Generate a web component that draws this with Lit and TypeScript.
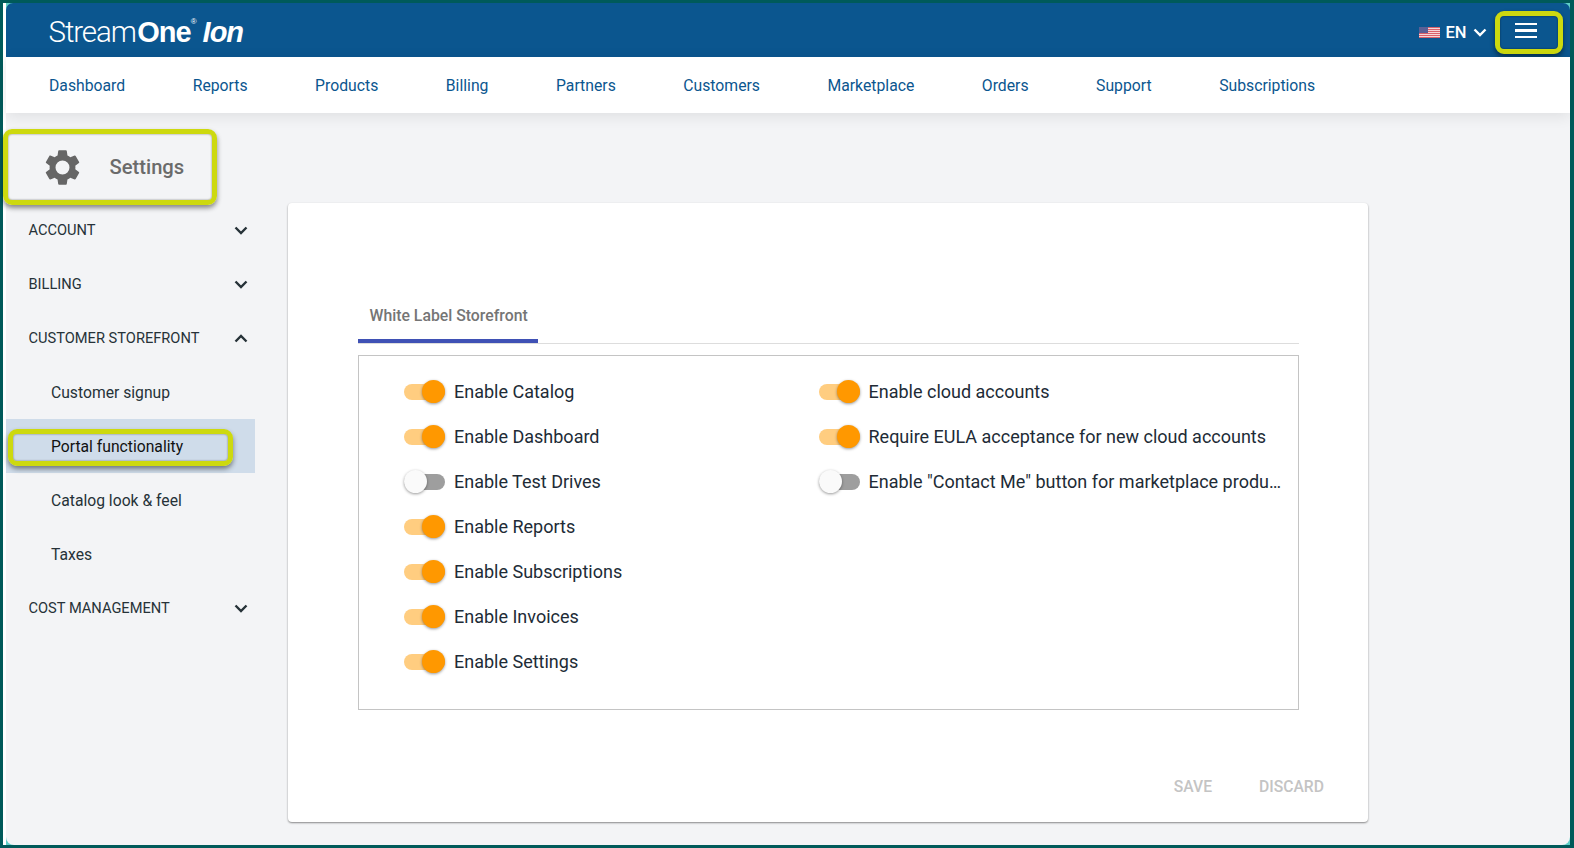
import { LitElement, html, css, svg } from "lit";
import { customElement } from "lit/decorators.js";

const NAV = ["Dashboard","Reports","Products","Billing","Partners","Customers","Marketplace","Orders","Support","Subscriptions"];
const LEFT: [string, boolean][] = [["Enable Catalog",true],["Enable Dashboard",true],["Enable Test Drives",false],["Enable Reports",true],["Enable Subscriptions",true],["Enable Invoices",true],["Enable Settings",true]];
const RIGHT: [string, boolean][] = [["Enable cloud accounts",true],["Require EULA acceptance for new cloud accounts",true],["Enable \"Contact Me\" button for marketplace products",false]];

const chev = (up: boolean) => html`<svg class="chev" viewBox="0 0 14 9" width="14" height="9"><path d=${up ? "M1.5 7.5 7 2l5.5 5.5" : "M1.5 1.5 7 7l5.5-5.5"} fill="none" stroke="#263238" stroke-width="2.4"/></svg>`;

@customElement("app-root")
export class AppRoot extends LitElement {
  static styles = css`
    :host { display: block; width: 1574px; height: 848px; box-sizing: border-box; background: #005a5a; padding: 3px 4px 3px 3px; font-family: Roboto, sans-serif; overflow: hidden; }
    .frame { position: relative; height: 100%; background: #fff; border-left: 3px solid #fff; display: flex; flex-direction: column; }
    .corner { position: absolute; width: 10px; height: 10px; background: #5fcfc8; z-index: 0; }
    .c1 { left: 0; top: 0; } .c2 { right: 0; top: 0; } .c3 { left: 0; bottom: 0; } .c4 { right: 0; bottom: 0; }
    .head { position: relative; z-index: 1; flex: none; height: 54px; background: #0b568f; color: #fff; display: flex; align-items: center; padding: 0 0 0 42.5px; border-radius: 7px 7px 0 0; }
    .logo { display: flex; align-items: baseline; margin-top: 4px; font-family: "Liberation Sans", Arial, sans-serif; font-size: 29px; letter-spacing: -1px; }
    .logo .thin { font-family: Roboto, sans-serif; font-weight: 300; font-size: 29.5px; letter-spacing: -1.1px; margin-right: 1.5px; }
    .logo b { font-weight: 700; }
    .logo sup { font-size: 8px; align-self: flex-start; margin: 2px 0 0 0; letter-spacing: 0; }
    .logo i { font-weight: 700; margin-left: 6px; }
    .spacer { flex: 1; }
    .lang { display: flex; align-items: center; font-size: 16.5px; font-weight: 500; margin: 4px 28px 0 0; }
    .lang svg.flag { margin-right: 5px; }
    .lang svg.ch { margin-left: 6.5px; }
    .burger { width: 22px; display: flex; flex-direction: column; gap: 4px; margin: 1px 33px 0 0; }
    .burger span { height: 2.5px; background: #fff; }
    .nav { position: relative; z-index: 1; flex: none; height: 56px; background: #fff; display: flex; align-items: center; gap: 67.5px; padding-left: 43px; box-shadow: 0 3px 14px rgba(0,0,0,.09); }
    .nav a { font-size: 15.75px; color: #0b568f; }
    .main { position: relative; flex: 1; display: flex; min-height: 0; background: #f3f4f6; border-radius: 0 0 8px 8px; z-index: 0; }
    .side { width: 249px; flex: none; }
    .title { height: 90px; box-sizing: border-box; padding: 18px 0 0 35px; display: flex; align-items: center; gap: 25.5px; font-size: 20.2px; font-weight: 500; color: #6b6b6b; position: relative; }
    .item { height: 54px; display: flex; align-items: center; justify-content: space-between; font-size: 14.65px; color: #263238; padding: 0 7px 0 22.5px; box-sizing: border-box; position: relative; }
    .item.sub { padding-left: 45px; font-size: 15.7px; }
    .item.active { background: #cfdcea; color: #111; }
    .mark { position: absolute; border: 5px solid #cdd90f; border-radius: 9px; box-shadow: 0 3px 5px rgba(0,0,0,.45), inset 0 0 2px rgba(0,0,0,.5); pointer-events: none; box-sizing: border-box; }
    .m1 { left: -3px; top: 16px; width: 214px; height: 76px; }
    .m2 { left: 1.5px; top: 10px; width: 225px; height: 37px; }
    .m3 { right: 7px; top: 8px; width: 68px; height: 43px; z-index: 3; }
    .content { flex: 1; padding: 90px 0 0 33px; }
    .card { width: 1080px; height: 619px; background: #fff; border-radius: 4px; box-shadow: 0 1px 2px rgba(0,0,0,.45); box-sizing: border-box; padding: 100px 69px 0 70px; display: flex; flex-direction: column; }
    .tabs { border-bottom: 1px solid #ddd; height: 40px; display: flex; flex: none; }
    .tab { width: 180px; height: 40px; box-sizing: border-box; border-bottom: 4px solid #3f51b5; padding-left: 11.5px; font-size: 15.8px; font-weight: 500; color: #757575; line-height: 25px; margin-bottom: -1px; }
    .panel { margin-top: 11px; height: 355px; box-sizing: border-box; border: 1px solid #c4c4c4; display: grid; grid-template-columns: 414.5px 1fr; padding: 13px 15px 0 45px; flex: none; }
    .col { display: flex; flex-direction: column; min-width: 0; }
    .row { height: 45px; display: flex; align-items: center; gap: 9px; font-size: 18px; color: #212b36; min-width: 0; }
    .row .lbl { white-space: nowrap; overflow: hidden; text-overflow: ellipsis; min-width: 0; }
    .sw { position: relative; flex: none; width: 41px; height: 16px; border-radius: 8px; background: #ffcd80; }
    .sw::after { content: ""; position: absolute; top: -4px; right: 0; width: 23px; height: 23px; border-radius: 50%; background: #ff9800; box-shadow: 0 1px 3px rgba(0,0,0,.4); }
    .sw.off { background: #9e9e9e; }
    .sw.off::after { right: auto; left: 0; background: #fafafa; }
    .actions { display: flex; justify-content: flex-end; gap: 47px; margin-top: 67px; margin-right: -25px; font-size: 15.7px; font-weight: 500; color: #c4c4c4; }
  `;

  private rows(list: [string, boolean][]) {
    return list.map(([t, on]) => html`<div class="row"><span class="sw ${on ? "" : "off"}"></span><span class="lbl">${t}</span></div>`);
  }

  render() {
    return html`<div class="frame">
      <span class="corner c1"></span><span class="corner c2"></span><span class="corner c3"></span><span class="corner c4"></span>
      <header class="head">
        <div class="logo"><span class="thin">Stream</span><b>One</b><sup>®</sup><i>Ion</i></div>
        <div class="spacer"></div>
        <div class="lang">
          <svg class="flag" width="21" height="11" viewBox="0 0 21 11">
            <rect width="21" height="11" fill="#f5d5d8"/>
            ${[0,2,4,6,8,10].map(y => svg`<rect y=${y} width="21" height="1" fill="#d9606a"/>`)}
            <rect width="9" height="6" fill="#5a5f96"/>
          </svg>
          EN
          <svg class="ch" width="14" height="9" viewBox="0 0 14 9"><path d="M1.5 1.5 7 7l5.5-5.5" fill="none" stroke="#fff" stroke-width="2.4"/></svg>
        </div>
        <div class="burger"><span></span><span></span><span></span></div>
        <div class="mark m3"></div>
      </header>
      <nav class="nav">${NAV.map(n => html`<a>${n}</a>`)}</nav>
      <div class="main">
        <aside class="side">
          <div class="title">
            <svg width="43" height="43" viewBox="0 0 24 24"><path fill="#666" fill-rule="evenodd" d="M19.14 12.94c.04-.3.06-.61.06-.94 0-.32-.02-.64-.07-.94l2.03-1.58a.49.49 0 0 0 .12-.61l-1.92-3.32a.488.488 0 0 0-.59-.22l-2.39.96c-.5-.38-1.03-.7-1.62-.94l-.36-2.54a.484.484 0 0 0-.48-.41h-3.84c-.24 0-.43.17-.47.41l-.36 2.54c-.59.24-1.13.57-1.62.94l-2.39-.96c-.22-.08-.47 0-.59.22L2.74 8.87c-.12.21-.08.47.12.61l2.03 1.58c-.05.3-.09.63-.09.94s.02.64.07.94l-2.03 1.58a.49.49 0 0 0-.12.61l1.92 3.32c.12.22.37.29.59.22l2.39-.96c.5.38 1.03.7 1.62.94l.36 2.54c.05.24.24.41.48.41h3.84c.24 0 .44-.17.47-.41l.36-2.54c.59-.24 1.13-.56 1.62-.94l2.39.96c.22.08.47 0 .59-.22l1.92-3.32c.12-.22.07-.47-.12-.61l-2.01-1.58zM12 15.9A3.9 3.9 0 1 1 12 8.1a3.9 3.9 0 0 1 0 7.8z"/></svg>
            <span>Settings</span>
            <div class="mark m1"></div>
          </div>
          <div class="item">ACCOUNT ${chev(false)}</div>
          <div class="item">BILLING ${chev(false)}</div>
          <div class="item">CUSTOMER STOREFRONT ${chev(true)}</div>
          <div class="item sub">Customer signup</div>
          <div class="item sub active">Portal functionality<div class="mark m2"></div></div>
          <div class="item sub">Catalog look &amp; feel</div>
          <div class="item sub">Taxes</div>
          <div class="item">COST MANAGEMENT ${chev(false)}</div>
        </aside>
        <section class="content">
          <div class="card">
            <div class="tabs"><div class="tab">White Label Storefront</div></div>
            <div class="panel">
              <div class="col">${this.rows(LEFT)}</div>
              <div class="col">${this.rows(RIGHT)}</div>
            </div>
            <div class="actions"><span>SAVE</span><span>DISCARD</span></div>
          </div>
        </section>
      </div>
    </div>`;
  }
}
